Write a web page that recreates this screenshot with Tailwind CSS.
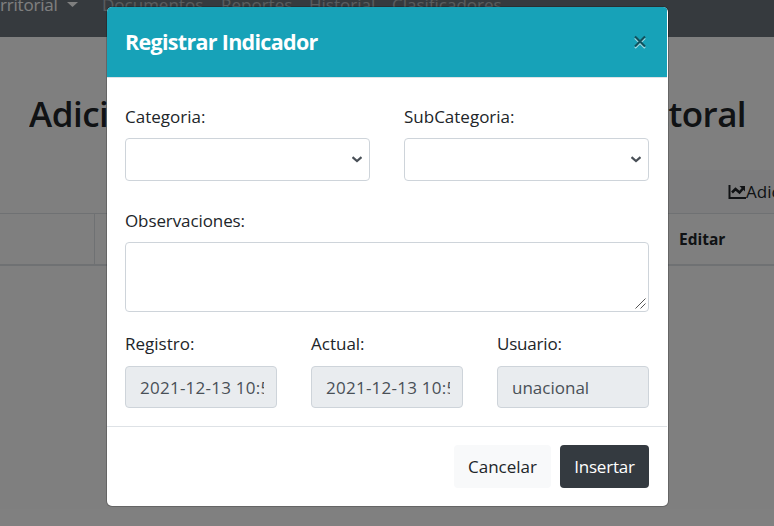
<!DOCTYPE html>
<html lang="es">
<head>
<meta charset="utf-8">
<title>Registrar Indicador</title>
<script src="https://cdn.jsdelivr.net/npm/@tailwindcss/browser@4"></script>
</head>
<body class="relative h-[526px] w-[774px] overflow-hidden bg-white font-['Open_Sans','Noto_Sans',sans-serif] text-[17px] leading-[27px] text-[#212529]">
  <nav class="flex h-[37px] items-start overflow-hidden bg-[#6c757d] whitespace-nowrap text-white/50">
    <span class="-mt-[9px] w-[67px] text-white tracking-[-0.2px]">rritorial</span>
    <svg class="mt-[2px] mr-[24px] h-[5px] w-[11px] shrink-0" viewBox="0 0 11 5"><path d="M0 0h11L5.500 5z" fill="#fff"/></svg>
    <span class="-mt-[9px] w-[119px]">Documentos</span>
    <span class="-mt-[9px] w-[88px]">Reportes</span>
    <span class="-mt-[9px] w-[83px]">Historial</span>
    <span class="-mt-[9px]">Clasificadores</span>
  </nav>
  <main>
    <div class="flex h-[133px] items-start justify-between pt-[53px] pr-[28px] pl-[29px] text-[35px] leading-[48px] font-semibold">
      <h1 class="w-[78px] overflow-hidden tracking-[-0.500px] whitespace-nowrap">Adici</h1><h1 class="tracking-[-0.6px]">Sectoral</h1>
    </div>
    <div class="ml-[600px] flex h-[43px] items-center overflow-hidden bg-[#f8f9fa] pl-[128px] whitespace-nowrap">
      <svg class="h-[18px] w-[18px] shrink-0" viewBox="0 0 18 18" fill="none" stroke="#212529"><path d="M1.500 2v13H18" stroke-width="2"/><path d="M4 9.500l3.500-3.500 4 3.500 3.500-4" stroke-width="2.600"/><path d="M11.500 3H17v5.500z" fill="#212529" stroke="none"/></svg>
      <span>Adicionar</span>
    </div>
    <div class="flex h-[53px] items-center border-t border-b-2 border-[#dee2e6] text-[15.500px] font-bold">
      <div class="h-full w-[95px] border-r border-[#dee2e6]"></div>
      <span class="ml-[584px] pt-px">Editar</span>
    </div>
  </main>

  <div class="absolute inset-0 bg-black/50 pt-[7px] pl-[107px]">
    <section class="flex h-[499px] w-[561px] flex-col overflow-hidden rounded-[5px] bg-white shadow-[0_0_0_1px_rgba(0,0,0,0.2)]">
      <header class="mr-px flex h-[71px] shrink-0 items-center justify-between border-b border-[#dee2e6] bg-[#17a2b8] pr-[20px] pl-[18px]">
        <h2 class="text-[21.500px] leading-[30px] font-bold tracking-[-0.700px] text-white">Registrar Indicador</h2>
        <svg class="h-[14px] w-[14px]" viewBox="0 0 14 14" fill="none"><path d="M2 3l10 10M12 3L2 13" stroke="#fff" stroke-opacity=".6" stroke-width="2"/><path d="M2 1.500l10 10M12 1.500l-10 10" stroke="#10515c" stroke-width="2.100"/></svg>
      </header>
      <form class="flex h-[348px] shrink-0 flex-col pt-[25px] pr-[19px] pl-[18px]">
        <div class="grid grid-cols-2 gap-[34px]">
          <div>
            <label class="block">Categoria:</label>
            <div class="mt-[8px] flex h-[43px] items-center justify-end rounded-[4px] border border-[#ced4da] pr-[6px]">
              <svg class="h-[8px] w-[12px]" viewBox="0 0 12 8" fill="none" stroke="#495057" stroke-width="2.200"><path d="M1.500 1.200L6 5l4.500-3.800"/></svg>
            </div>
          </div>
          <div>
            <label class="block">SubCategoria:</label>
            <div class="mt-[8px] flex h-[43px] items-center justify-end rounded-[4px] border border-[#ced4da] pr-[6px]">
              <svg class="h-[8px] w-[12px]" viewBox="0 0 12 8" fill="none" stroke="#495057" stroke-width="2.200"><path d="M1.500 1.200L6 5l4.500-3.800"/></svg>
            </div>
          </div>
        </div>
        <label class="mt-[26px] block tracking-[-0.100px]">Observaciones:</label>
        <div class="mt-[8px] flex h-[70px] shrink-0 items-end justify-end rounded-[4px] border border-[#ced4da] p-[2px]">
          <svg class="h-[11px] w-[11px]" viewBox="0 0 11 11" fill="none" stroke="#555" stroke-width="1"><path d="M.5 10.500l10-10M5.500 10.500l5-5"/></svg>
        </div>
        <div class="mt-[18px] grid grid-cols-3 gap-[34px]">
          <div>
            <label class="block">Registro:</label>
            <div class="mt-[9px] flex h-[42px] items-center rounded-[4px] border border-[#ced4da] bg-[#e9ecef] pr-[12px] pl-[14px] text-[#495057]"><span class="w-full overflow-hidden tracking-[0.250px] whitespace-nowrap">2021-12-13 10:52:38</span></div>
          </div>
          <div>
            <label class="block">Actual:</label>
            <div class="mt-[9px] flex h-[42px] items-center rounded-[4px] border border-[#ced4da] bg-[#e9ecef] pr-[12px] pl-[14px] text-[#495057]"><span class="w-full overflow-hidden tracking-[0.250px] whitespace-nowrap">2021-12-13 10:52:38</span></div>
          </div>
          <div>
            <label class="block tracking-[-0.200px]">Usuario:</label>
            <div class="mt-[9px] flex h-[42px] items-center rounded-[4px] border border-[#ced4da] bg-[#e9ecef] px-[14px] text-[#495057]"><span>unacional</span></div>
          </div>
        </div>
      </form>
      <footer class="mr-px flex h-[80px] shrink-0 items-start justify-end gap-[9px] border-t border-[#dee2e6] px-[18px] pt-[18px]">
        <button class="h-[43px] w-[97px] rounded-[4px] bg-[#f8f9fa]">Cancelar</button>
        <button class="h-[43px] w-[89px] rounded-[4px] bg-[#343a40] tracking-[-0.200px] text-white">Insertar</button>
      </footer>
    </section>
  </div>
</body>
</html>
